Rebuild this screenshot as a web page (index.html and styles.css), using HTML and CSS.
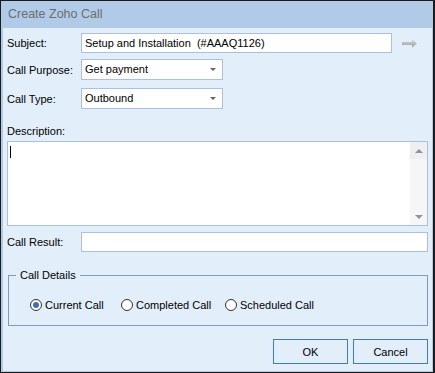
FILE: index.html
```html
<!DOCTYPE html>
<html lang="en">
<head>
  <meta charset="UTF-8">
  <title>Create Zoho Call</title>
  <link rel="stylesheet" href="styles.css">
</head>
<body>
  <div class="window">
    <div class="titlebar">Create Zoho Call</div>
    <div class="dialog">
      <div class="row row-subject">
        <span class="lbl">Subject:</span>
        <div class="field field-subject">Setup and Installation&nbsp; (#AAAQ1126)</div>
        <svg class="go-arrow" width="16" height="9" viewBox="0 0 16 9">
          <defs>
            <linearGradient id="ag" x1="0" y1="0" x2="0" y2="1">
              <stop offset="0" stop-color="#d8d8d8"/>
              <stop offset="1" stop-color="#9c9c9c"/>
            </linearGradient>
          </defs>
          <path d="M0 3 H10 V0.5 L15 4.5 L10 8.5 V6 H0 Z" fill="url(#ag)"/>
        </svg>
      </div>

      <div class="row row-purpose">
        <span class="lbl">Call Purpose:</span>
        <div class="field select">Get payment<span class="caret-down"></span></div>
      </div>

      <div class="row row-type">
        <span class="lbl">Call Type:</span>
        <div class="field select">Outbound<span class="caret-down"></span></div>
      </div>

      <div class="desc-label">Description:</div>
      <div class="textarea">
        <div class="text-area-body"><span class="cursor"></span></div>
        <div class="scrollbar">
          <div class="sb-btn"><span class="sb-up"></span></div>
          <div class="sb-track"></div>
          <div class="sb-btn"><span class="sb-down"></span></div>
        </div>
      </div>

      <div class="row row-result">
        <span class="lbl">Call Result:</span>
        <div class="field field-result"></div>
      </div>

      <fieldset class="group">
        <legend>Call Details</legend>
        <div class="radios">
          <label class="radio radio-current checked"><span class="dot"></span>Current Call</label>
          <label class="radio radio-completed"><span class="dot"></span>Completed Call</label>
          <label class="radio"><span class="dot"></span>Scheduled Call</label>
        </div>
      </fieldset>

      <div class="buttons">
        <button class="btn">OK</button>
        <button class="btn">Cancel</button>
      </div>
    </div>
  </div>
</body>
</html>
```

FILE: styles.css
```css
body {
  margin: 0;
  padding: 0;
  background: #ffffff;
  font-family: 'Liberation Sans', Arial, sans-serif;
  font-size: 11px;
  color: #000000;
}
.window {
  width: 435px;
  height: 373px;
  box-sizing: border-box;
  border: 1px solid #1c1c1c;
  border-right-width: 2px;
  background: #b0cae8;
  display: flex;
  flex-direction: column;
}
.titlebar {
  height: 27px;
  line-height: 27px;
  padding-left: 7px;
  font-size: 12.5px;
  color: #6e6e6e;
  flex: none;
}
.dialog {
  flex: 1;
  margin: 0 1px 1px 2px;
  background: #e3eefb;
  padding: 5px 4px 0 4px;
}
.row {
  display: flex;
  align-items: center;
}
.lbl {
  width: 74px;
  flex: none;
}
.field {
  box-sizing: border-box;
  background: #ffffff;
  border: 1px solid #abc0da;
  height: 20px;
  line-height: 18px;
  padding-left: 3px;
  white-space: nowrap;
}
.field-subject {
  width: 311px;
}
.go-arrow {
  margin-left: 10px;
}
.row-purpose {
  margin-top: 6px;
}
.row-type {
  margin-top: 8px;
}
.select {
  width: 142px;
  height: 21px;
  line-height: 19px;
  position: relative;
}
.caret-down {
  position: absolute;
  right: 6px;
  top: 8px;
  border-left: 3px solid transparent;
  border-right: 3px solid transparent;
  border-top: 3px solid #5b6677;
}
.desc-label {
  margin-top: 14px;
  height: 16px;
  line-height: 16px;
}
.textarea {
  margin-top: 2px;
  width: 421px;
  height: 85px;
  box-sizing: border-box;
  border: 1px solid #abc0da;
  background: #ffffff;
  display: flex;
}
.text-area-body {
  flex: 1;
  padding: 4px 0 0 2px;
}
.cursor {
  display: block;
  width: 1px;
  height: 12px;
  background: #000000;
}
.scrollbar {
  width: 17px;
  background: #f6f6f6;
  display: flex;
  flex-direction: column;
}
.sb-btn {
  height: 17px;
  display: flex;
  align-items: center;
  justify-content: center;
  background: #efefef;
}
.sb-btn:last-child {
  background: #f6f6f6;
}
.sb-track {
  flex: 1;
}
.sb-up {
  border-left: 4px solid transparent;
  border-right: 4px solid transparent;
  border-bottom: 4px solid #8a94a6;
}
.sb-down {
  border-left: 4px solid transparent;
  border-right: 4px solid transparent;
  border-top: 4px solid #8a94a6;
}
.row-result {
  margin-top: 6px;
}
.field-result {
  width: 347px;
}
.group {
  margin: 16px 1px 0 1px;
  width: 420px;
  height: 58px;
  box-sizing: border-box;
  border: 1px solid #7c9cc4;
  padding: 0 0 0 7px;
}
.group legend {
  padding: 0 4px;
  line-height: 14px;
}
.radios {
  display: flex;
  margin: 17px 0 0 14px;
}
.radio {
  display: flex;
  align-items: center;
}
.radio-current {
  width: 91px;
}
.radio-completed {
  width: 104px;
}
.dot {
  width: 12px;
  height: 12px;
  box-sizing: border-box;
  border: 1px solid #333333;
  border-radius: 50%;
  background: #ffffff;
  margin-right: 3px;
  display: flex;
  align-items: center;
  justify-content: center;
}
.radio.checked .dot::after {
  content: "";
  width: 6px;
  height: 6px;
  border-radius: 50%;
  background: #3a6eb5;
}
.buttons {
  display: flex;
  justify-content: flex-end;
  gap: 5px;
  margin-top: 13px;
}
.btn {
  width: 75px;
  height: 25px;
  border: 1px solid #3f7cbd;
  background: #e3eefb;
  font-family: 'Liberation Sans', Arial, sans-serif;
  font-size: 11px;
  color: #000000;
  padding: 0;
}
```
